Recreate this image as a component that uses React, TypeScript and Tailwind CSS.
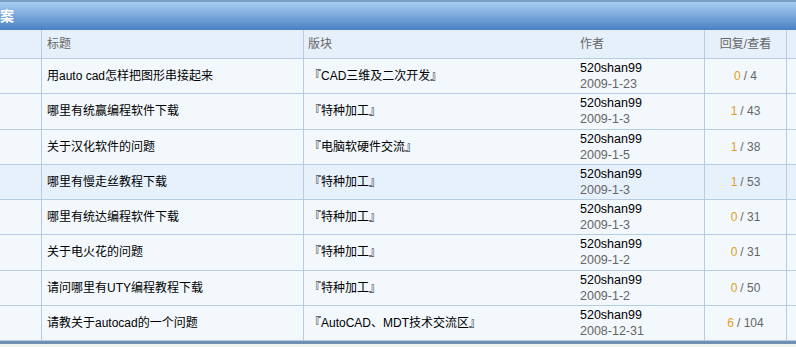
import React from "react";

type Topic = {
  title: string;
  board: string;
  author: string;
  date: string;
  replies: number;
  views: number;
  hot?: boolean;
};

const TOPICS: Topic[] = [
  { title: "用auto cad怎样把图形串接起来", board: "『CAD三维及二次开发』", author: "520shan99", date: "2009-1-23", replies: 0, views: 4 },
  { title: "哪里有统赢编程软件下载", board: "『特种加工』", author: "520shan99", date: "2009-1-3", replies: 1, views: 43 },
  { title: "关于汉化软件的问题", board: "『电脑软硬件交流』", author: "520shan99", date: "2009-1-5", replies: 1, views: 38 },
  { title: "哪里有慢走丝教程下载", board: "『特种加工』", author: "520shan99", date: "2009-1-3", replies: 1, views: 53, hot: true },
  { title: "哪里有统达编程软件下载", board: "『特种加工』", author: "520shan99", date: "2009-1-3", replies: 0, views: 31 },
  { title: "关于电火花的问题", board: "『特种加工』", author: "520shan99", date: "2009-1-2", replies: 0, views: 31 },
  { title: "请问哪里有UTY编程教程下载", board: "『特种加工』", author: "520shan99", date: "2009-1-2", replies: 0, views: 50 },
  { title: "请教关于autocad的一个问题", board: "『AutoCAD、MDT技术交流区』", author: "520shan99", date: "2008-12-31", replies: 6, views: 104 },
];

const FONT = "font-['Liberation_Sans','Noto_Sans_CJK_SC',sans-serif]";

export default function App() {
  return (
    <div className={`w-[796px] h-[347px] overflow-hidden bg-[#eef4ee] text-[12px] ${FONT}`}>
      {/* title bar */}
      <div className="h-[30px] border-t-2 border-[#7b9fc4] bg-gradient-to-b from-[#a9cdf1] to-[#4a80c3] flex items-center">
        <span className="ml-0 text-[14px] font-bold text-white">案</span>
      </div>

      {/* column header */}
      <div className="flex h-[29px] bg-[#e6f0fb] text-[#666] border-b border-[#b5cce2]">
        <div className="w-[42px] border-r border-[#b5cce2]" />
        <div className="w-[262px] border-r border-[#b5cce2] pl-[5px] flex items-center">标题</div>
        <div className="w-[276px] pl-[4px] flex items-center">版块</div>
        <div className="w-[125px] border-r border-[#b5cce2] flex items-center">作者</div>
        <div className="w-[82px] border-r border-[#b5cce2] flex items-center justify-center">回复/查看</div>
        <div className="flex-1" />
      </div>

      {/* rows */}
      {TOPICS.map((t, i) => (
        <div
          key={i}
          className={`flex h-[35.25px] border-b border-[#b5cce2] ${t.hot ? "bg-[#e7f1fc]" : "bg-[#f3f8fd]"}`}
        >
          <div className="w-[42px] border-r border-[#b5cce2]" />
          <div className="w-[262px] border-r border-[#b5cce2] pl-[5px] flex items-center text-black">{t.title}</div>
          <div className="w-[276px] pl-[5px] flex items-center text-black">{t.board}</div>
          <div className="w-[125px] border-r border-[#b5cce2] flex flex-col justify-center leading-[16px]">
            <span className="text-black text-[12.5px]">{t.author}</span>
            <span className="text-[#666] text-[12.5px]">{t.date}</span>
          </div>
          <div className="w-[82px] border-r border-[#b5cce2] flex items-center justify-center text-[#666]">
            <span className="text-[#e0a020]">{t.replies}</span>
            <span className="ml-[3px]">/ {t.views}</span>
          </div>
          <div className="flex-1" />
        </div>
      ))}

      <div className="h-[3px] bg-[#6f8fb0]" />
    </div>
  );
}
